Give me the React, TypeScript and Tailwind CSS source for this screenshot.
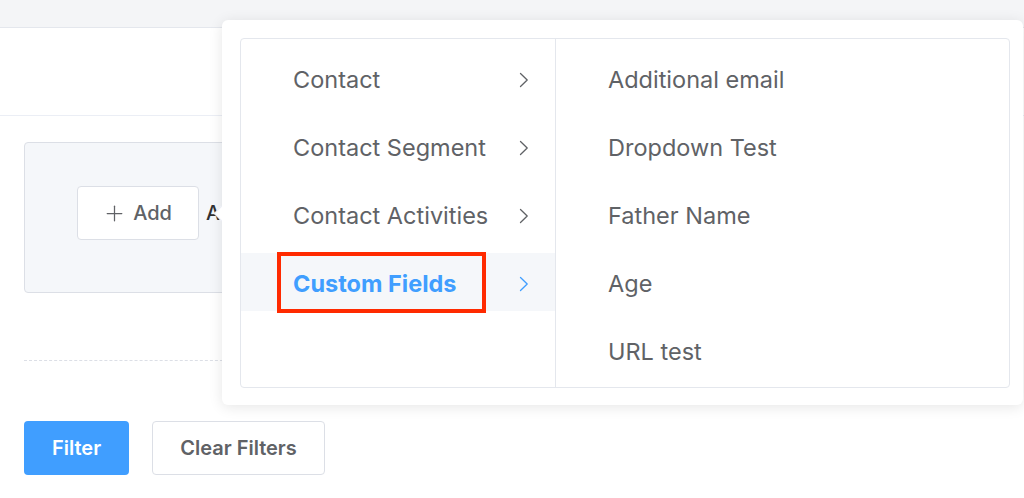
import { Plus } from 'lucide-react';

const groups = ['Contact', 'Contact Segment', 'Contact Activities', 'Custom Fields'];
const fields = ['Additional email', 'Dropdown Test', 'Father Name', 'Age', 'URL test'];

function Chevron({ active }: { active?: boolean }) {
  return (
    <svg width="10" height="16" viewBox="0 0 10 16" fill="none">
      <path
        d="M1.5 1.5 L8.2 8 L1.5 14.5"
        stroke={active ? '#409eff' : '#606266'}
        strokeWidth="1.3"
        strokeLinecap="round"
        strokeLinejoin="round"
      />
    </svg>
  );
}

export default function App() {
  return (
    <div className="relative h-[498px] w-[1024px] overflow-hidden bg-white font-['Inter',sans-serif] text-[#606266]">
      {/* Header strip */}
      <div className="h-[28px] border-b border-[#e4e7ed] bg-[#f4f5f7]" />
      <div className="h-[88px] border-b border-[#ebeef5]" />

      {/* Filter builder */}
      <div className="px-6 pt-[26px]">
        <div className="flex h-[151px] w-[420px] items-start gap-[7px] rounded border border-[#dcdfe6] bg-[#f5f7fa] pl-[52px] pt-[43px]">
          <button className="flex h-[54px] w-[122px] items-center justify-center gap-[6px] rounded border border-[#dcdfe6] bg-white pr-[2px] text-[20px] font-medium">
            <Plus className="h-[25px] w-[25px]" strokeWidth={1.2} />
            Add
          </button>
          <span className="mt-[12px] text-[20px] font-medium text-[#303133]">And</span>
        </div>

        <div className="mt-[67px] w-[420px] border-t border-dashed border-[#dcdfe6]" />

        <div className="mt-[60px] flex gap-[23px]">
          <button className="h-[54px] w-[105px] rounded bg-[#409eff] text-[20px] font-semibold text-white">
            Filter
          </button>
          <button className="h-[54px] w-[173px] rounded border border-[#dcdfe6] bg-white text-[20px] font-semibold">
            Clear Filters
          </button>
        </div>
      </div>

      {/* Cascader popover */}
      <div className="absolute left-[222px] top-[20px] h-[385px] w-[801px] rounded-md bg-white pb-[17px] pl-[18px] pr-[13px] pt-[18px] shadow-[0_2px_14px_0_rgba(0,0,0,0.1)]">
        <div className="absolute left-[-6px] top-[188px] h-[11px] w-[11px] rotate-45 border-b border-l border-[#ebeef5] bg-white" />
        <div className="flex h-full rounded border border-[#e4e7ed]">
          <ul className="flex w-[315px] flex-col gap-[10px] border-r border-[#e4e7ed] pt-[10px]">
            {groups.map((g, i) => {
              const active = i === groups.length - 1;
              return (
                <li
                  key={g}
                  className={`relative flex h-[58px] items-center justify-between pl-[52px] pr-[26px] pt-[3px] text-[23.5px] ${
                    active ? 'bg-[#f5f7fa] font-bold text-[#409eff]' : ''
                  }`}
                >
                  <span>{g}</span>
                  <Chevron active={active} />
                  {active && (
                    <div className="absolute left-[36px] top-[-1px] h-[61px] w-[209px] border-[4px] border-[#ff2a00]" />
                  )}
                </li>
              );
            })}
          </ul>
          <ul className="flex flex-1 flex-col gap-[10px] pt-[10px]">
            {fields.map((f) => (
              <li key={f} className="flex h-[58px] items-center pl-[52px] pt-[3px] text-[23.5px]">
                {f}
              </li>
            ))}
          </ul>
        </div>
      </div>
    </div>
  );
}
